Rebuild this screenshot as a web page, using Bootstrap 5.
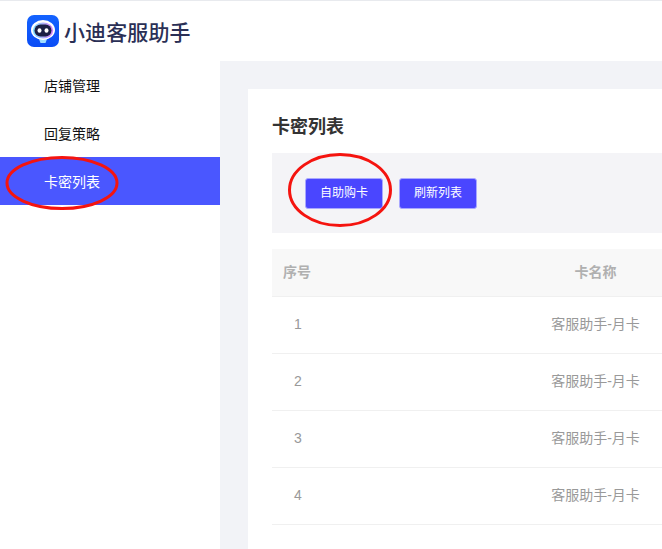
<!DOCTYPE html>
<html lang="zh">
<head>
<meta charset="utf-8">
<link href="https://cdn.jsdelivr.net/npm/bootstrap@5.3.0/dist/css/bootstrap.min.css" rel="stylesheet">
<style>
html,body{height:549px;overflow:hidden;}
body{font-family:"Liberation Sans","Noto Sans CJK SC",sans-serif;background:#fff;color:#000;}
.app-shell{width:662px;height:549px;overflow:hidden;position:relative;border-top:1px solid #e8eaee;}
.brand-bar{height:60px;padding-left:27px;}
.brand-logo{width:32px;height:32px;flex:none;}
.brand-name{font-size:21px;font-weight:500;color:#2a2f55;letter-spacing:.1px;margin-left:5px;line-height:1;padding-top:2px;}
.app-body{height:488px;}
.side-menu{width:220px;flex:none;}
.side-item{height:48px;padding-left:44px;padding-top:2px;font-size:14px;color:#111;}
.side-item.on{background:#4a57ff;color:#fff;}
.work-area{background:#f2f3f7;padding:28px 0 0 28px;flex:1;min-width:0;overflow:hidden;}
.work-panel{background:#fff;padding:24px;width:800px;height:470px;}
.panel-title{font-size:18px;font-weight:700;color:#333;line-height:26px;margin:0 0 14px;padding-top:1px;height:26px;}
.tool-strip{background:#f4f4f7;height:80px;padding-left:33px;gap:16px;}
.act-btn{background:#4a46ff;color:#fff;font-size:12px;height:31px;width:78px;padding:0;border:1px solid #a9a8ff;border-radius:3px;line-height:28px;}
.card-table{width:752px;margin-top:16px;table-layout:fixed;border-collapse:collapse;font-size:14px;}
.card-table th{background:#f8f8f8;color:#b0b0b0;font-weight:700;height:47px;border-bottom:1px solid #f0f0f0;}
.card-table td{height:57px;color:#999;border-bottom:1px solid #f0f0f0;padding-bottom:2px;}
.cell-no{width:70px;padding-left:11px;}
td.cell-no{padding-left:22px;}
.cell-name{width:508px;padding-left:0;text-align:center;}
.red-ring{position:absolute;pointer-events:none;}
</style>
</head>
<body>
<div class="app-shell">
  <div class="brand-bar d-flex align-items-center">
    <svg class="brand-logo" viewBox="0 0 32 32">
      <defs>
        <linearGradient id="lg" x1="0" y1="0" x2="0" y2="1"><stop offset="0" stop-color="#1463ff"/><stop offset="1" stop-color="#0a4cf5"/></linearGradient>
        <linearGradient id="glow" x1="0" y1="0" x2="1" y2="0"><stop offset="0" stop-color="#7fe3ff"/><stop offset="1" stop-color="#d77cf5"/></linearGradient>
      </defs>
      <rect width="32" height="32" rx="7" fill="url(#lg)"/>
      <path d="M12 24h8l-1.500 4h-5z" fill="#9fdcff"/>
      <ellipse cx="16" cy="15" rx="12" ry="10" fill="#fff"/>
      <ellipse cx="16" cy="15.500" rx="10.200" ry="8" fill="url(#glow)"/>
      <rect x="7.500" y="9.500" width="17" height="12" rx="6" fill="#1b1f45"/>
      <ellipse cx="12.500" cy="15.500" rx="2" ry="2.300" fill="#fff"/>
      <ellipse cx="19.500" cy="15.500" rx="2" ry="2.300" fill="#fff"/>
    </svg>
    <div class="brand-name">小迪客服助手</div>
  </div>
  <div class="app-body d-flex">
    <div class="side-menu">
      <div class="side-item d-flex align-items-center">店铺管理</div>
      <div class="side-item d-flex align-items-center">回复策略</div>
      <div class="side-item on d-flex align-items-center">卡密列表</div>
    </div>
    <div class="work-area">
      <div class="work-panel">
        <h1 class="panel-title">卡密列表</h1>
        <div class="tool-strip d-flex align-items-center">
          <button class="act-btn" type="button">自助购卡</button>
          <button class="act-btn" type="button">刷新列表</button>
        </div>
        <table class="card-table">
          <thead><tr><th class="cell-no">序号</th><th class="cell-name">卡名称</th><th></th></tr></thead>
          <tbody>
            <tr><td class="cell-no">1</td><td class="cell-name">客服助手-月卡</td><td></td></tr>
            <tr><td class="cell-no">2</td><td class="cell-name">客服助手-月卡</td><td></td></tr>
            <tr><td class="cell-no">3</td><td class="cell-name">客服助手-月卡</td><td></td></tr>
            <tr><td class="cell-no">4</td><td class="cell-name">客服助手-月卡</td><td></td></tr>
          </tbody>
        </table>
      </div>
    </div>
  </div>
  <svg class="red-ring" style="left:0;top:-1px" width="662" height="549" viewBox="0 0 662 549" fill="none" stroke="#f5140f" stroke-width="3">
    <ellipse cx="62" cy="183" rx="55" ry="25.500"/>
    <ellipse cx="340" cy="190" rx="50.500" ry="35.500"/>
  </svg>
</div>
</body>
</html>
